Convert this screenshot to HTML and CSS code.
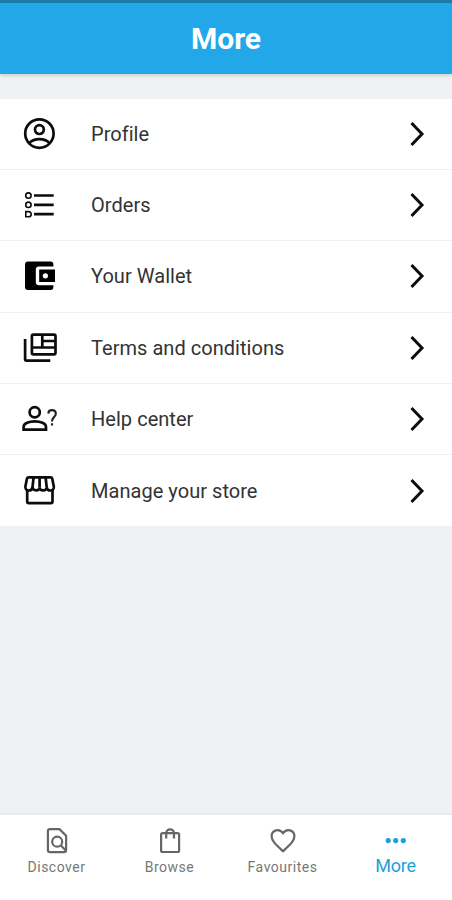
FILE: index.html
```
<!DOCTYPE html>
<html lang="en">
<head>
    <meta charset="UTF-8">
    <meta name="viewport" content="width=device-width, initial-scale=1.0">
    <title>More</title>
    <link rel="stylesheet" href="styles.css">
</head>
<body>
    <header>
        <h1>More</h1>
    </header>

    <!-- Menu -->
    <ul class="menu">
        <li>
            <svg class="icon" viewBox="0 0 40 40">
                <circle cx="19.4" cy="19.6" r="14.2"/>
                <circle cx="19.4" cy="15.6" r="4.4"/>
                <path d="M9 29.2C14.5 23.8 24.3 23.8 29.8 29.2"/>
            </svg>
            <span>Profile</span>
            <svg class="arrow" viewBox="0 0 16 26"><path d="M2.5 2L13 13L2.5 24"/></svg>
        </li>
        <li>
            <svg class="icon" viewBox="0 0 40 40">
                <path d="M14 10.5H33.7M14 19.8H33.7M14 29.1H33.7"/>
                <g class="thin">
                    <circle cx="8.4" cy="10.6" r="2.7"/>
                    <circle cx="8.4" cy="19.8" r="2.7"/>
                    <path d="M5.8 26.6H8.6A2.6 2.6 0 0 1 8.6 31.8H5.8Z"/>
                </g>
            </svg>
            <span>Orders</span>
            <svg class="arrow" viewBox="0 0 16 26"><path d="M2.5 2L13 13L2.5 24"/></svg>
        </li>
        <li>
            <svg class="icon solid" viewBox="0 0 40 40">
                <path d="M8 5.5H30.5Q33.4 5.5 33.4 8.5V10.4H19Q15.8 10.4 15.8 13.6V26.1Q15.8 29.3 19 29.3H33.4V31Q33.4 34 30.5 34H8Q5 34 5 31V8.5Q5 5.5 8 5.5Z"/>
                <path fill-rule="evenodd" d="M19.2 13.6H35V26H19.2ZM25.4 17.2A2.6 2.6 0 1 0 25.4 22.4A2.6 2.6 0 1 0 25.4 17.2Z"/>
            </svg>
            <span>Your Wallet</span>
            <svg class="arrow" viewBox="0 0 16 26"><path d="M2.5 2L13 13L2.5 24"/></svg>
        </li>
        <li>
            <svg class="icon" viewBox="0 0 40 40">
                <rect x="11.9" y="6.7" width="23.6" height="19.6" rx="1.5"/>
                <path d="M22.3 6.7V19.5M11.9 19.5H35.5M22.3 13H35.5"/>
                <path d="M5.1 11V31.2Q5.1 32.6 6.5 32.6H30.3"/>
            </svg>
            <span>Terms and conditions</span>
            <svg class="arrow" viewBox="0 0 16 26"><path d="M2.5 2L13 13L2.5 24"/></svg>
        </li>
        <li>
            <svg class="icon" viewBox="0 0 40 40">
                <circle cx="14.7" cy="13.3" r="5.1"/>
                <path d="M3.6 30.7V28C3.6 20.4 26 20.4 26 28V30.7Z"/>
                <path class="mark" d="M28.3 14.6C28.5 9.9 35.8 10.1 35.8 14.7C35.8 17.8 32 18.4 32 22.4M32 24.2V26.6"/>
            </svg>
            <span>Help center</span>
            <svg class="arrow" viewBox="0 0 16 26"><path d="M2.5 2L13 13L2.5 24"/></svg>
        </li>
        <li>
            <svg class="icon" viewBox="0 0 40 40">
                <path d="M7.2 19V30.6Q7.2 32.1 8.7 32.1H31Q32.5 32.1 32.5 30.6V19"/>
                <path d="M8.6 6.3H30.6Q31.9 6.3 32.2 7.5L33.8 15.5C34.6 20.4 27.5 21 26.7 16.2C26.5 20.4 19.8 20.4 19.6 16.2C19.4 20.4 12.9 20.4 12.5 16.2C11.8 21 4.7 20.4 5.4 15.5L7 7.5Q7.3 6.3 8.6 6.3Z"/>
                <path d="M13.6 6.3L12.5 16.2M19.6 6.3V16.2M25.6 6.3L26.7 16.2"/>
            </svg>
            <span>Manage your store</span>
            <svg class="arrow" viewBox="0 0 16 26"><path d="M2.5 2L13 13L2.5 24"/></svg>
        </li>
    </ul>

    <!-- Bottom navigation -->
    <nav>
        <a class="tab">
            <svg viewBox="0 0 30 30">
                <path d="M17.5 3.2H8Q5.9 3.2 5.9 5.3V24Q5.9 26.1 8 26.1H22Q24.1 26.1 24.1 24V9.8Z"/>
                <circle cx="15.2" cy="15.7" r="5"/>
                <path d="M18.7 19.3L24 24.8"/>
            </svg>
            <span>Discover</span>
        </a>
        <a class="tab">
            <svg viewBox="0 0 30 30">
                <rect x="6.1" y="7.2" width="18" height="18.8" rx="1.6"/>
                <path d="M11.2 12.5V7.2C11.2 2 19 2 19 7.2V12.5"/>
            </svg>
            <span>Browse</span>
        </a>
        <a class="tab">
            <svg viewBox="0 0 30 30">
                <path d="M15 25.2C8.5 19.3 3.6 15.2 3.6 10.2C3.6 4 11.3 1.9 15 7.2C18.7 1.9 26.4 4 26.4 10.2C26.4 15.2 21.5 19.3 15 25.2Z"/>
            </svg>
            <span>Favourites</span>
        </a>
        <a class="tab active">
            <svg viewBox="0 0 30 30">
                <circle cx="7.2" cy="14.6" r="2.6"/>
                <circle cx="14.7" cy="14.6" r="2.6"/>
                <circle cx="22.3" cy="14.6" r="2.6"/>
            </svg>
            <span>More</span>
        </a>
    </nav>
</body>
</html>
```
FILE: styles.css
```
* {
    box-sizing: border-box;
}
body {
    display: flex;
    flex-direction: column;
    height: 900px;
    margin: 0;
    font-family: Roboto, sans-serif;
    background-color: #eff1f3;
    color: #333;
}
header {
    height: 73.5px;
    border-top: 3px solid #1a7ba6;
    background-color: #22a7e8;
    color: white;
    text-align: center;
    box-shadow: 0 1px 4px rgba(0, 0, 0, 0.2);
}
h1 {
    margin: 0;
    font-size: 30px;
    font-weight: 700;
    line-height: 71px;
}
.menu {
    list-style: none;
    margin: 25px 0 0;
    padding: 0;
    background-color: white;
}
.menu li {
    display: flex;
    align-items: center;
    height: 71.4px;
    padding: 0 27px 0 20px;
    border-bottom: 1.5px solid #eff0f1;
}
.menu li:last-child {
    height: 70.4px;
    border-bottom: none;
}
.menu span {
    flex: 1;
    margin-left: 31px;
    font-size: 20px;
    letter-spacing: 0.04px;
}
svg {
    fill: none;
    stroke: #0c0c0c;
    stroke-width: 2.7;
}
.icon {
    width: 40px;
    height: 40px;
}
.icon .thin {
    stroke-width: 1.6;
}
.icon .mark {
    stroke: #222;
    stroke-width: 2.1;
}
.solid {
    fill: #000;
    stroke: none;
}
.arrow {
    width: 16px;
    height: 26px;
    stroke-width: 3;
}
nav {
    display: flex;
    height: 87px;
    margin-top: auto;
    padding-top: 11px;
    border-top: 2px solid #e8eaec;
    background-color: white;
}
.tab {
    flex: 1;
    display: flex;
    flex-direction: column;
    align-items: center;
    color: #777;
    font-size: 14px;
    letter-spacing: 0.5px;
}
.tab svg {
    width: 30px;
    height: 30px;
    stroke: #666;
    stroke-width: 2.2;
}
.tab span {
    line-height: 23px;
}
.active {
    color: #1d9fdc;
    font-size: 18px;
    letter-spacing: -0.2px;
}
.active svg {
    fill: #1d9fdc;
    stroke: none;
}
.active span {
    line-height: 20px;
}
```
